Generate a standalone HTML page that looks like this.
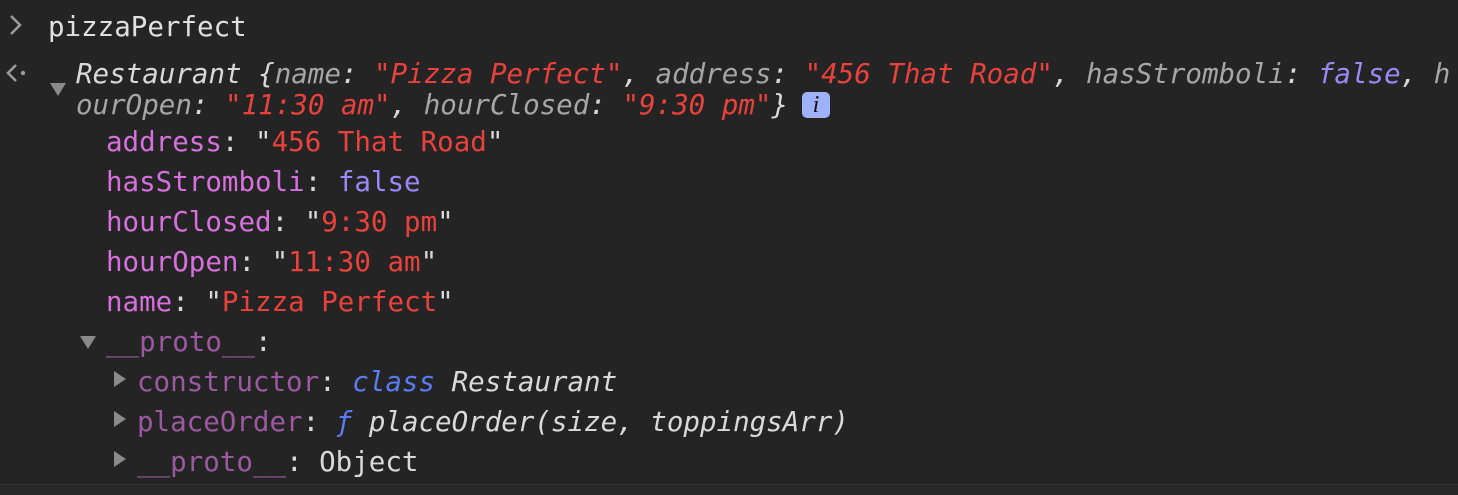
<!DOCTYPE html><html><head><style>
body{margin:0;width:1458px;height:494px;background:#242424;overflow:hidden;position:relative;font-family:"DejaVu Sans Mono","Liberation Mono",monospace;font-size:27.5px;color:#d9d9d9}
.l{position:absolute;white-space:pre;line-height:40px;height:40px}
.k{color:#d570dc}.s{color:#e9423d}.b{color:#9b88f6}.g{color:#a6a6a6}.p{color:#9b5aa0}.c{color:#5a7cf0}
i{font-style:italic}
.tri{position:absolute;width:0;height:0}
</style></head><body>
<div style="position:absolute;left:0;top:484px;width:1458px;height:10px;background:#282828;border-top:1px solid #333"></div>
<svg style="position:absolute;left:8px;top:14px" width="16" height="22"><path d="M3 2 L12 11 L3 20" stroke="#9a9a9a" stroke-width="2.6" fill="none"/></svg>
<div class="l" style="left:48px;top:7px;color:#e0e0e0">pizzaPerfect</div>
<svg style="position:absolute;left:5px;top:62px" width="24" height="22"><path d="M11 3 L3 11 L11 19" stroke="#9a9a9a" stroke-width="2.6" fill="none"/><circle cx="18" cy="11" r="2.2" fill="#9a9a9a"/></svg>
<div class="tri" style="left:50px;top:83px;border-left:8px solid transparent;border-right:8px solid transparent;border-top:13px solid #8a8a8a"></div>
<div class="l" style="left:76px;top:54px"><i>Restaurant {<span class="g">name</span>: <span class="s">"Pizza Perfect"</span>, <span class="g">address</span>: <span class="s">"456 That Road"</span>, <span class="g">hasStromboli</span>: <span class="b">false</span>, <span class="g">h</span></i></div>
<div class="l" style="left:76px;top:85px"><i><span class="g">ourOpen</span>: <span class="s">"11:30 am"</span>, <span class="g">hourClosed</span>: <span class="s">"9:30 pm"</span>}</i></div>
<div style="position:absolute;left:802px;top:92px;width:28px;height:26px;border-radius:5px;background:#9fb1f8;color:#111;font-family:'Liberation Serif',serif;font-style:italic;font-size:24px;line-height:26px;text-align:center">i</div>
<div class="l" style="left:106px;top:122px"><span class="k">address</span>: "<span class="s">456 That Road</span>"</div>
<div class="l" style="left:106px;top:162px"><span class="k">hasStromboli</span>: <span class="b">false</span></div>
<div class="l" style="left:106px;top:202px"><span class="k">hourClosed</span>: "<span class="s">9:30 pm</span>"</div>
<div class="l" style="left:106px;top:242px"><span class="k">hourOpen</span>: "<span class="s">11:30 am</span>"</div>
<div class="l" style="left:106px;top:282px"><span class="k">name</span>: "<span class="s">Pizza Perfect</span>"</div>
<div class="tri" style="left:80px;top:336px;border-left:8px solid transparent;border-right:8px solid transparent;border-top:13px solid #8a8a8a"></div>
<div class="l" style="left:106px;top:322px"><span class="p">__proto__</span>:</div>
<div class="tri" style="left:114px;top:371px;border-top:8px solid transparent;border-bottom:8px solid transparent;border-left:12px solid #8a8a8a"></div>
<div class="l" style="left:137px;top:362px"><span class="p">constructor</span>: <i class="c">class</i> <i>Restaurant</i></div>
<div class="tri" style="left:114px;top:411px;border-top:8px solid transparent;border-bottom:8px solid transparent;border-left:12px solid #8a8a8a"></div>
<div class="l" style="left:137px;top:402px"><span class="p">placeOrder</span>: <i class="c">ƒ</i> <i>placeOrder(size, toppingsArr)</i></div>
<div class="tri" style="left:114px;top:451px;border-top:8px solid transparent;border-bottom:8px solid transparent;border-left:12px solid #8a8a8a"></div>
<div class="l" style="left:137px;top:442px"><span class="p">__proto__</span>: Object</div>
</body></html>
